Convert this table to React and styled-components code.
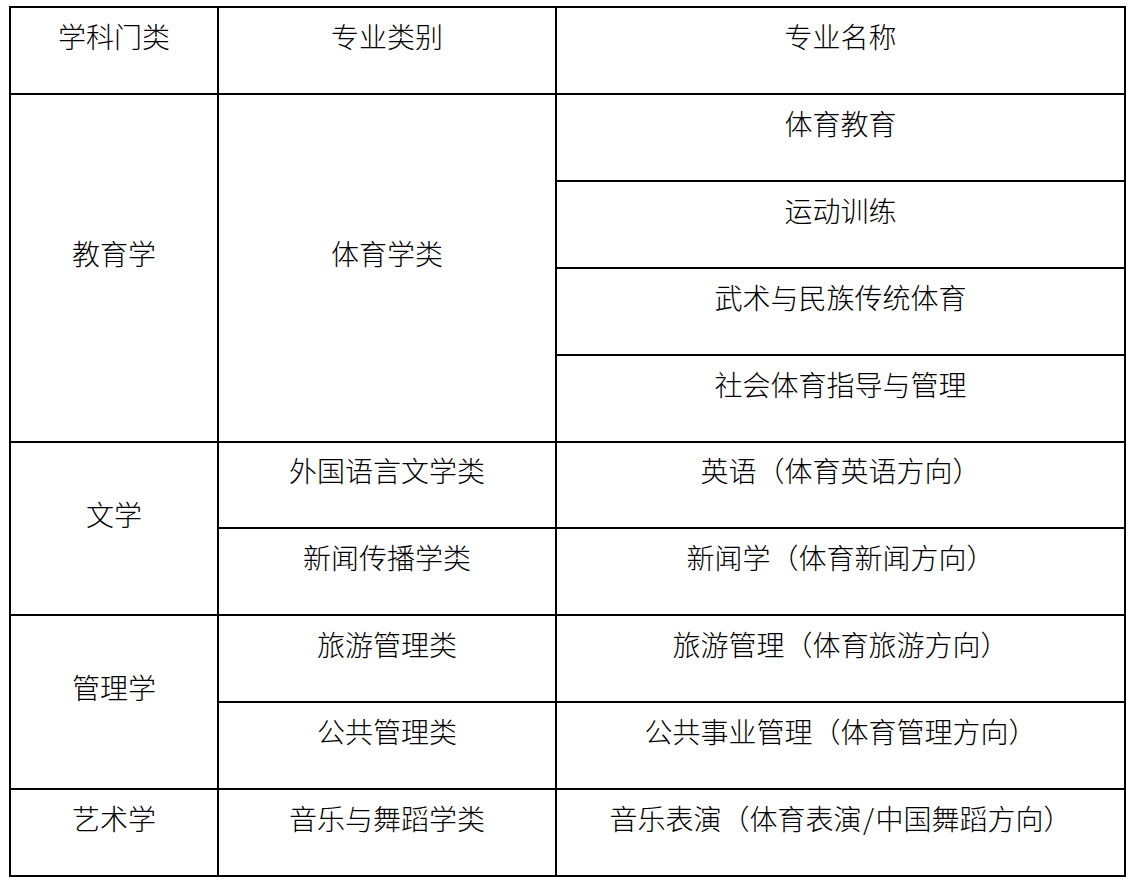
import React from "react";
import styled, { createGlobalStyle } from "styled-components";

const Global = createGlobalStyle`
  html, body {
    margin: 0;
    padding: 0;
    background: #ffffff;
  }
  body {
    font-family: "Noto Sans CJK SC", "Noto Sans CJK JP", sans-serif;
    color: #000;
  }
`;

const Page = styled.div`
  padding: 6px 0 0 9px;
`;

const Grid = styled.div`
  display: grid;
  grid-template-columns: 208px 338px 569px;
  grid-template-rows: 87px 87px 87px 87px 87px 86px 87px 87px 87px 87px;
  width: max-content;
  border-top: 2px solid #000;
  border-left: 2px solid #000;
`;

const Cell = styled.div`
  grid-column: ${(p) => p.$col};
  grid-row: ${(p) => p.$row} / span ${(p) => p.$span || 1};
  border-right: 2px solid #000;
  border-bottom: 2px solid #000;
  display: flex;
  align-items: center;
  justify-content: center;
  padding-bottom: 30px;
  box-sizing: border-box;
  min-width: 0;
`;

const Text = styled.span`
  font-family: "Noto Sans CJK SC", "Noto Sans CJK JP", sans-serif;
  font-size: 28px;
  line-height: 28px;
  font-weight: 300;
  white-space: nowrap;
  color: #000;
`;

const Slash = styled.span`
  display: inline-block;
  width: 14px;
  text-align: center;
`;

const renderText = (t) => {
  if (!t.includes("/")) return t;
  const [a, b] = t.split("/");
  return (
    <>
      {a}
      <Slash>/</Slash>
      {b}
    </>
  );
};

const cells = [
  { col: 1, row: 1, text: "学科门类" },
  { col: 2, row: 1, text: "专业类别" },
  { col: 3, row: 1, text: "专业名称" },
  { col: 1, row: 2, span: 4, text: "教育学" },
  { col: 2, row: 2, span: 4, text: "体育学类" },
  { col: 3, row: 2, text: "体育教育" },
  { col: 3, row: 3, text: "运动训练" },
  { col: 3, row: 4, text: "武术与民族传统体育" },
  { col: 3, row: 5, text: "社会体育指导与管理" },
  { col: 1, row: 6, span: 2, text: "文学" },
  { col: 2, row: 6, text: "外国语言文学类" },
  { col: 3, row: 6, text: "英语（体育英语方向）" },
  { col: 2, row: 7, text: "新闻传播学类" },
  { col: 3, row: 7, text: "新闻学（体育新闻方向）" },
  { col: 1, row: 8, span: 2, text: "管理学" },
  { col: 2, row: 8, text: "旅游管理类" },
  { col: 3, row: 8, text: "旅游管理（体育旅游方向）" },
  { col: 2, row: 9, text: "公共管理类" },
  { col: 3, row: 9, text: "公共事业管理（体育管理方向）" },
  { col: 1, row: 10, text: "艺术学" },
  { col: 2, row: 10, text: "音乐与舞蹈学类" },
  { col: 3, row: 10, text: "音乐表演（体育表演/中国舞蹈方向）" },
];

export default function App() {
  return (
    <>
      <Global />
      <Page>
        <Grid>
          {cells.map((c, i) => (
            <Cell key={i} $col={c.col} $row={c.row} $span={c.span}>
              <Text>{renderText(c.text)}</Text>
            </Cell>
          ))}
        </Grid>
      </Page>
    </>
  );
}
